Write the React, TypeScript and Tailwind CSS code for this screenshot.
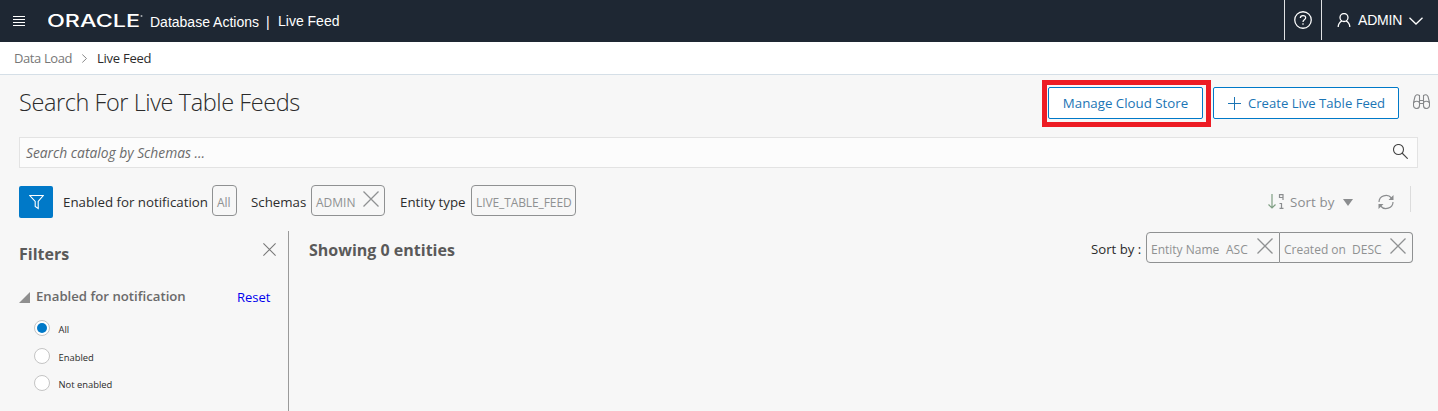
import type { ReactNode } from "react";

function Cross({ className }: { className: string }) {
  return (
    <svg className={className} viewBox="0 0 16 16" fill="none" stroke="currentColor" strokeWidth="1.3">
      <path d="M.5.5l15 15M15.5.5l-15 15" />
    </svg>
  );
}

function Chip({ className, children }: { className: string; children: ReactNode }) {
  return (
    <span className={`flex h-[31px] items-center border border-[#8f9192] pt-[4px] pl-1 text-[12px] whitespace-nowrap text-[#8f9192] ${className}`}>
      {children}
    </span>
  );
}

function Radio({ label, checked, className }: { label: string; checked?: boolean; className: string }) {
  return (
    <label className={`flex items-center ${className}`}>
      <span className="flex size-4 items-center justify-center rounded-full border border-[#c4c4c4] bg-white">
        {checked && <span className="size-[10px] rounded-full bg-[#0079c8]" />}
      </span>
      <span className="ml-[8.5px] pt-[3px] text-[9.4px] leading-3 text-[#2b2b2b]">{label}</span>
    </label>
  );
}

function Header() {
  return (
    <header className="flex h-[42px] bg-[#1e2733] font-['Liberation_Sans',sans-serif] text-sm text-white">
      <svg className="mt-4 ml-[13px] h-[11px] w-3" viewBox="0 0 12 11" stroke="white" strokeWidth="1" shapeRendering="crispEdges">
        <path d="M0 .5h12M0 3.5h12M0 6.5h12M0 9.5h12" />
      </svg>
      <svg className="mt-[10px] ml-[23px] h-5 w-[96px]" viewBox="0 0 96 20" fill="white">
        <text x="-1" y="17" fontFamily="Inter" fontWeight="500" fontSize="17" textLength="93" lengthAdjust="spacingAndGlyphs">ORACLE</text>
        <circle cx="93.5" cy="6" r="1" fillOpacity=".6" />
      </svg>
      <span className="mt-3 ml-[6px] w-[116px] leading-5 whitespace-nowrap">Database Actions</span>
      <span className="mt-3 w-3 leading-5">|</span>
      <span className="mt-[11px] leading-5">Live Feed</span>
      <div className="ml-auto flex h-10">
        <div className="flex w-[37px] justify-center border-l border-[#dfe1e3] pt-[11px]">
          <svg className="-ml-px size-[18px]" viewBox="0 0 17 17" fill="none" stroke="white" strokeWidth="1.2">
            <circle cx="8.5" cy="8.5" r="7.8" />
            <path d="M6 6.7c0-3.2 5-3.2 5-.3 0 2-2.5 1.8-2.5 4M8.5 11.5v1.6" />
          </svg>
        </div>
        <div className="flex w-[117px] border-l border-[#dfe1e3] pl-[15px]">
          <svg className="mt-[13px] h-[14px] w-[14px]" viewBox="0 0 14 14" fill="none" stroke="white" strokeWidth="1.3">
            <ellipse cx="7" cy="4.5" rx="4" ry="4" />
            <path d="M1.2 14c0-3.5 1.3-4.800 3.800-6.300M12.800 14c0-3.500-1.300-4.800-3.800-6.300" />
          </svg>
          <span className="mt-[10px] ml-[7px] w-[45px] leading-5 tracking-[-0.2px]">ADMIN</span>
          <svg className="mt-[17px] ml-[6px] h-2 w-[14px]" viewBox="0 0 14 8" fill="none" stroke="white" strokeWidth="1.3">
            <path d="M.5.7L7 7L13.5.7" />
          </svg>
        </div>
      </div>
    </header>
  );
}

function TitleRow() {
  return (
    <div className="flex h-[62px] pt-[5px] pl-[19px]">
      <h1 className="mt-[6px] text-[23.5px] leading-8 font-light tracking-[-0.42px] whitespace-nowrap">Search For Live Table Feeds</h1>
      <div className="ml-auto flex h-[47px] w-[169px] border-[5px] border-[#ed1c24] p-px pt-[2px]">
        <button className="h-8 w-[155px] rounded-[2px] border border-[#0079c8] bg-white pt-px text-[13.3px] whitespace-nowrap text-[#1b75b5]">Manage Cloud Store</button>
      </div>
      <button className="mt-[7px] ml-[2px] flex h-8 w-[186px] items-center rounded-[2px] border border-[#0079c8] bg-white pt-px pl-[14px] text-[13.1px] whitespace-nowrap text-[#1b75b5]">
        <svg className="mr-[7px] size-[13px]" viewBox="0 0 13 13" stroke="currentColor" shapeRendering="crispEdges">
          <path d="M0 6.5h13M6.5 0v13" />
        </svg>
        Create Live Table Feed
      </button>
      <svg className="mt-[14px] mr-[8px] ml-[14px] h-[15px] w-[17px]" viewBox="0 0 17 15" fill="none" stroke="#858789" strokeWidth="1.1">
        <path d="M.5 11.5V8.5L2 2.5Q3.500-.5 6.500 1.500V11.500q0 3-3 3t-3-3M16.500 11.500V8.500L15 2.500Q13.500-.5 10.500 1.500V11.500q0 3 3 3t3-3M6.500 6.500h4M6.500 9.500h4M.8 8.500q3-2.500 5.700 0M16.200 8.500q-3-2.500-5.700 0" />
      </svg>
    </div>
  );
}

function FilterBar() {
  return (
    <div className="mt-[17px] flex h-8 items-start pl-[19px] text-[13.3px] leading-5 text-[#2d2d2d]">
      <button className="mt-px flex h-8 w-[34px] items-center justify-center rounded-[2px] bg-[#0079c8]">
        <svg className="h-4 w-[15px]" viewBox="0 0 15 16" fill="none" stroke="white" strokeWidth="1.1">
          <path d="M.8 1.5h13.4L9.2 7.5V14.5L6.2 12.5V7.5z" />
        </svg>
      </button>
      <span className="mt-[7px] ml-[10px] w-[149px] whitespace-nowrap">Enabled for notification</span>
      <Chip className="w-[25px] rounded-[4px]">All</Chip>
      <span className="mt-[7px] ml-[14px] w-[60px]">Schemas</span>
      <Chip className="w-[74px] rounded-[4px]"><span className="w-[47px]">ADMIN</span><Cross className="-mt-[7px] size-4" /></Chip>
      <span className="mt-[7px] ml-[15px] w-[71px] whitespace-nowrap">Entity type</span>
      <Chip className="w-[105px] rounded-[4px] tracking-[-0.1px]">LIVE_TABLE_FEED</Chip>
      <div className="mr-[27px] ml-auto flex h-8 text-[#8b8d8f]">
        <svg className="mt-[9px] h-[15px] w-4" viewBox="0 0 16 15" fill="none" stroke="currentColor" strokeWidth="1.2">
          <path d="M4 0v13.5M.5 10.5L4 14l3.5-3.5" stroke="#7f9e83" />
          <path d="M15 6V.6h-3.5V3.5h3.5M11.5 9.5h2V14M11.5 14.4h4" />
        </svg>
        <span className="mt-[7px] ml-[6px] w-[53px] tracking-[0.1px]">Sort by</span>
        <svg className="mt-[14px] h-[7px] w-[10px]" viewBox="0 0 10 7" fill="currentColor"><path d="M0 0h10L5 7z" /></svg>
        <svg className="mt-[9px] ml-[25px] size-4" viewBox="0 0 16 16" fill="none" stroke="currentColor" strokeWidth="1.2">
          <path d="M1 8a7 6.5 0 0 1 12.5-4M15 8a7 6.5 0 0 1-12.5 4" />
          <path d="M15.5 1v5h-5zM.5 15v-5h5z" fill="currentColor" stroke="none" />
        </svg>
        <span className="mt-px ml-4 h-[26px] w-px bg-[#dcdcdc]" />
      </div>
    </div>
  );
}

function FilterPanel() {
  return (
    <aside className="h-full w-[289px] border-r border-[#9a9a9a] pl-[19px]">
      <div className="flex">
        <h2 className="mt-[11px] w-[244px] text-base leading-6 font-bold text-[#5a5a5a]">Filters</h2>
        <Cross className="mt-3 size-[13px] text-[#777]" />
      </div>
      <div className="mt-5 flex leading-5">
        <svg className="mt-[6px] mr-[6px] size-[11px]" viewBox="0 0 11 11" fill="#8f8f8f"><path d="M11 0v11H0z" /></svg>
        <span className="w-[201px] text-[13.2px] font-semibold whitespace-nowrap text-[#6a6a6a]">Enabled for notification</span>
        <span className="mt-px text-[13px] text-[#0000ee]">Reset</span>
      </div>
      <div className="pl-[15px]">
        <Radio label="All" checked className="mt-[13px]" />
        <Radio label="Enabled" className="mt-3" />
        <Radio label="Not enabled" className="mt-[11px]" />
      </div>
    </aside>
  );
}

export default function App() {
  return (
    <div className="flex h-[411px] w-[1438px] flex-col overflow-hidden bg-[#f7f7f7] font-['Open_Sans',sans-serif] text-[#2b2b2b]">
      <Header />
      <nav className="flex h-[33px] shrink-0 border-b border-[#d5dfe7] bg-white pl-[14px] text-[13px] leading-8">
        <span className="w-[68px] tracking-[-0.4px] whitespace-nowrap text-[#777]">Data Load</span>
        <svg className="mt-3 mr-[10px] h-[9px] w-[5px]" viewBox="0 0 5 9" fill="none" stroke="#888"><path d="M.3.5L4.5 4.5L.3 8.5" /></svg>
        <span className="tracking-[-0.25px]">Live Feed</span>
      </nav>
      <TitleRow />
      <div className="mr-5 ml-[19px] flex h-[31px] shrink-0 items-center border border-[#e3e3e3] bg-[#fcfcfc] pl-[6px] text-[13.8px] text-[#6b6b6b] italic">
        <span className="pt-[2px]">Search catalog by Schemas ...</span>
        <svg className="mr-[9px] mb-[2px] ml-auto size-[15px]" viewBox="0 0 15 15" fill="none" stroke="#444" strokeWidth="1.1">
          <circle cx="5.5" cy="5.5" r="5" /><path d="M9 9l5.7 5.7" />
        </svg>
      </div>
      <FilterBar />
      <div className="mt-[14px] flex h-[180px] shrink-0">
        <FilterPanel />
        <main className="flex grow pl-5">
          <h2 className="mt-[7px] text-base leading-6 font-bold whitespace-nowrap text-[#5a5a5a]">Showing 0 entities</h2>
          <div className="mt-px mr-[25px] ml-auto flex">
            <span className="mt-[7px] w-[55px] text-[13.2px] leading-5 whitespace-nowrap">Sort by :</span>
            <Chip className="w-[134px] rounded-l-[4px]"><span className="w-[75px]">Entity Name</span><span className="w-[31px]">ASC</span><Cross className="-mt-[7px] size-4" /></Chip>
            <Chip className="w-[133px] rounded-r-[4px] border-l-0"><span className="w-[68px]">Created on</span><span className="w-[38px]">DESC</span><Cross className="-mt-[7px] size-4" /></Chip>
          </div>
        </main>
      </div>
    </div>
  );
}
